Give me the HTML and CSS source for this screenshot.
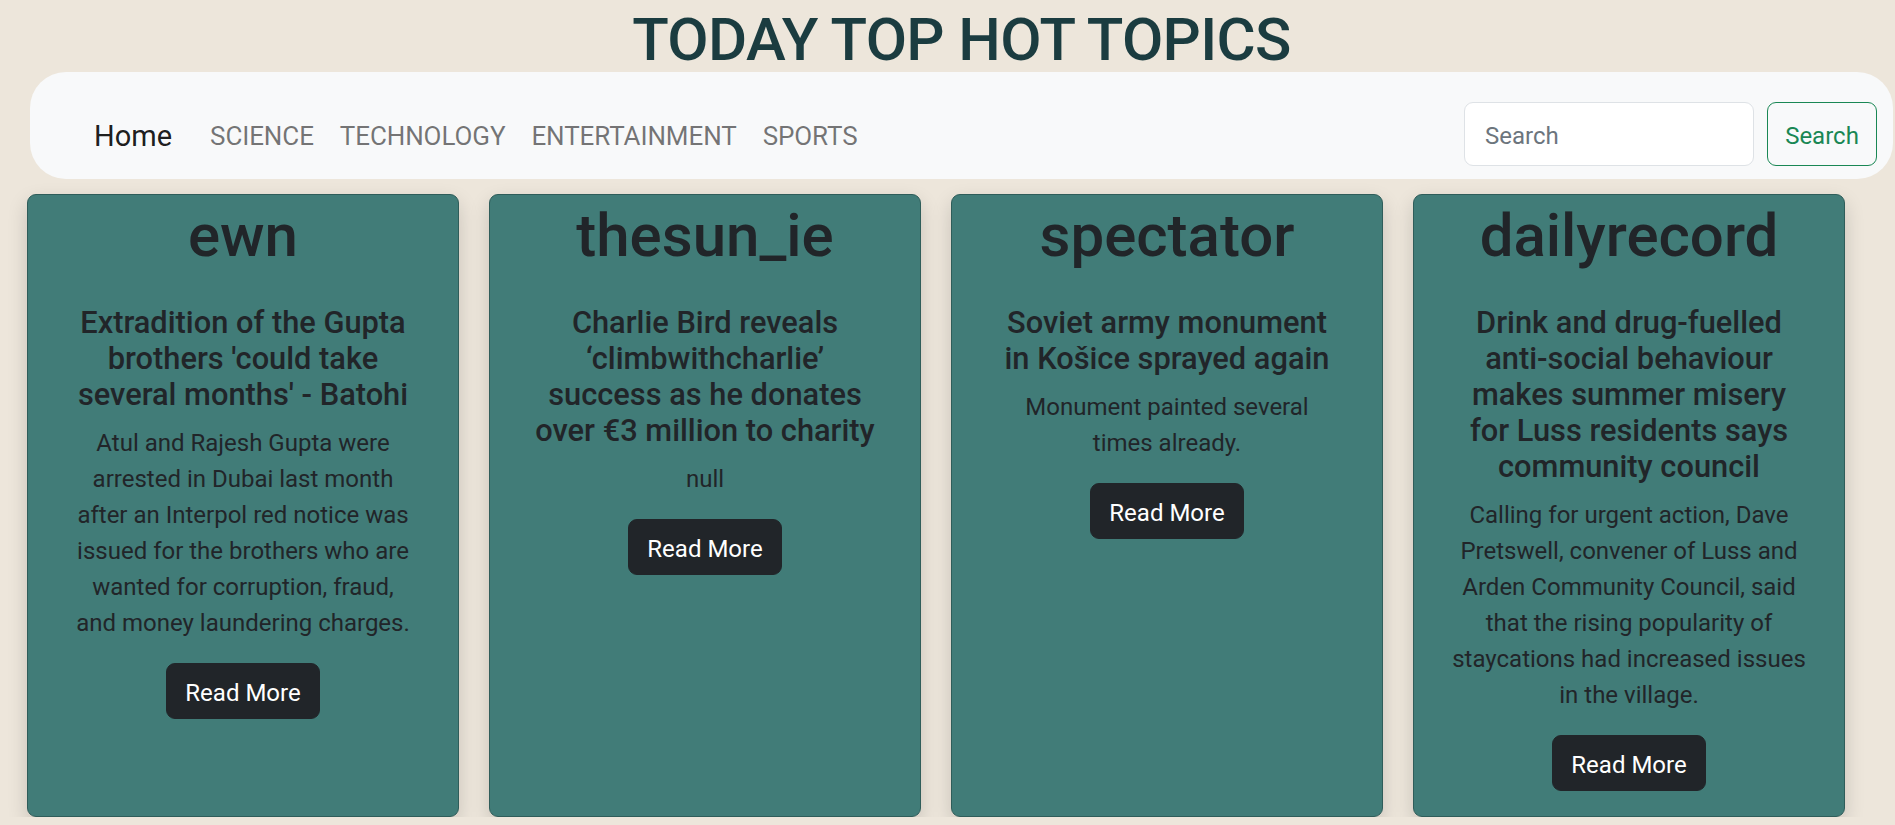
FILE: index.html
```html
<!DOCTYPE html>
<html lang="en">
<head>
<meta charset="utf-8">
<title>Today Top Hot Topics</title>
<link rel="stylesheet" href="styles.css">
</head>
<body>
<header class="top">
  <h1 class="page-title">TODAY TOP HOT TOPICS</h1>
  <nav class="navbar">
    <a class="brand" href="#">Home</a>
    <ul class="nav-links">
      <li><a href="#">SCIENCE</a></li>
      <li><a href="#">TECHNOLOGY</a></li>
      <li><a href="#">ENTERTAINMENT</a></li>
      <li><a href="#">SPORTS</a></li>
    </ul>
    <form class="search">
      <input class="search-input" type="search" placeholder="Search">
      <button class="search-btn" type="button">Search</button>
    </form>
  </nav>
</header>
<main class="cards">
  <article class="card">
    <h2 class="card-source">ewn</h2>
    <div class="card-body">
      <h3 class="card-headline">Extradition of the Gupta<br>brothers 'could take<br>several months' - Batohi</h3>
      <p class="card-text">Atul and Rajesh Gupta were<br>arrested in Dubai last month<br>after an Interpol red notice was<br>issued for the brothers who are<br>wanted for corruption, fraud,<br>and money laundering charges.</p>
      <a class="btn-read" href="#">Read More</a>
    </div>
  </article>
  <article class="card">
    <h2 class="card-source">thesun_ie</h2>
    <div class="card-body">
      <h3 class="card-headline">Charlie Bird reveals<br>‘climbwithcharlie’<br>success as he donates<br>over €3 million to charity</h3>
      <p class="card-text">null</p>
      <a class="btn-read" href="#">Read More</a>
    </div>
  </article>
  <article class="card">
    <h2 class="card-source">spectator</h2>
    <div class="card-body">
      <h3 class="card-headline">Soviet army monument<br>in Košice sprayed again</h3>
      <p class="card-text">Monument painted several<br>times already.</p>
      <a class="btn-read" href="#">Read More</a>
    </div>
  </article>
  <article class="card">
    <h2 class="card-source">dailyrecord</h2>
    <div class="card-body">
      <h3 class="card-headline">Drink and drug-fuelled<br>anti-social behaviour<br>makes summer misery<br>for Luss residents says<br>community council</h3>
      <p class="card-text">Calling for urgent action, Dave<br>Pretswell, convener of Luss and<br>Arden Community Council, said<br>that the rising popularity of<br>staycations had increased issues<br>in the village.</p>
      <a class="btn-read" href="#">Read More</a>
    </div>
  </article>
</main>
</body>
</html>
```
FILE: styles.css
```css
* { box-sizing: border-box; }

body {
  margin: 0;
  background: #ede6db;
  font-family: Roboto, "Liberation Sans", sans-serif;
  color: #212529;
  overflow: hidden;
}

.top {
  padding: 0 2px 0 30px;
}

.page-title {
  margin: 0;
  padding-top: 8px;
  font-size: 60px;
  font-weight: 500;
  line-height: 64px;
  letter-spacing: -0.65px;
  text-align: center;
  color: #1b3c40;
}

.navbar {
  display: flex;
  align-items: center;
  height: 107px;
  padding: 30px 16px 13px 64px;
  background: #f8f9fa;
  border-radius: 36px;
}

.brand {
  margin-right: 25px;
  padding-top: 4px;
  font-size: 29px;
  color: rgba(0, 0, 0, 0.9);
  text-decoration: none;
}

.nav-links {
  display: flex;
  margin: 0;
  padding: 0;
  list-style: none;
}

.nav-links a {
  display: block;
  padding: 4px 13px 0;
  font-size: 26px;
  letter-spacing: -0.1px;
  color: rgba(0, 0, 0, 0.55);
  text-decoration: none;
}

.search {
  display: flex;
  gap: 13px;
  margin: 0 0 0 auto;
}

.search-input {
  width: 290px;
  height: 64px;
  padding: 3px 20px 0;
  font: 24px Roboto, sans-serif;
  color: #212529;
  background: #fff;
  border: 1px solid #dee2e6;
  border-radius: 9px;
}

.search-input::placeholder {
  color: #6c757d;
}

.search-btn {
  width: 110px;
  height: 64px;
  padding: 3px 0 0;
  font: 24px Roboto, sans-serif;
  color: #198754;
  background: transparent;
  border: 1px solid #198754;
  border-radius: 9px;
}

.cards {
  display: flex;
  align-items: stretch;
  gap: 30px;
  padding: 15px 0 0 27px;
}

.card {
  flex: 0 0 432px;
  background: #417c78;
  border: 1px solid #2f5d5a;
  border-radius: 9px;
  box-shadow: 0 8px 20px rgba(0, 0, 0, 0.16);
  text-align: center;
}

.card-source {
  margin: 5px 0 9px;
  font-size: 60px;
  font-weight: 500;
  line-height: 72px;
}

.card-body {
  padding: 24px 24px 25px;
}

.card-headline {
  margin: 0 0 12px;
  font-size: 30.8px;
  font-weight: 500;
  line-height: 36px;
}

.card-text {
  margin: 0 0 22px;
  font-size: 24px;
  line-height: 36px;
}

.btn-read {
  display: inline-block;
  padding: 11px 18px 7px;
  font-size: 24px;
  line-height: 36px;
  color: #fff;
  background: #212529;
  border: 1px solid #212529;
  border-radius: 9px;
  text-decoration: none;
}
```
